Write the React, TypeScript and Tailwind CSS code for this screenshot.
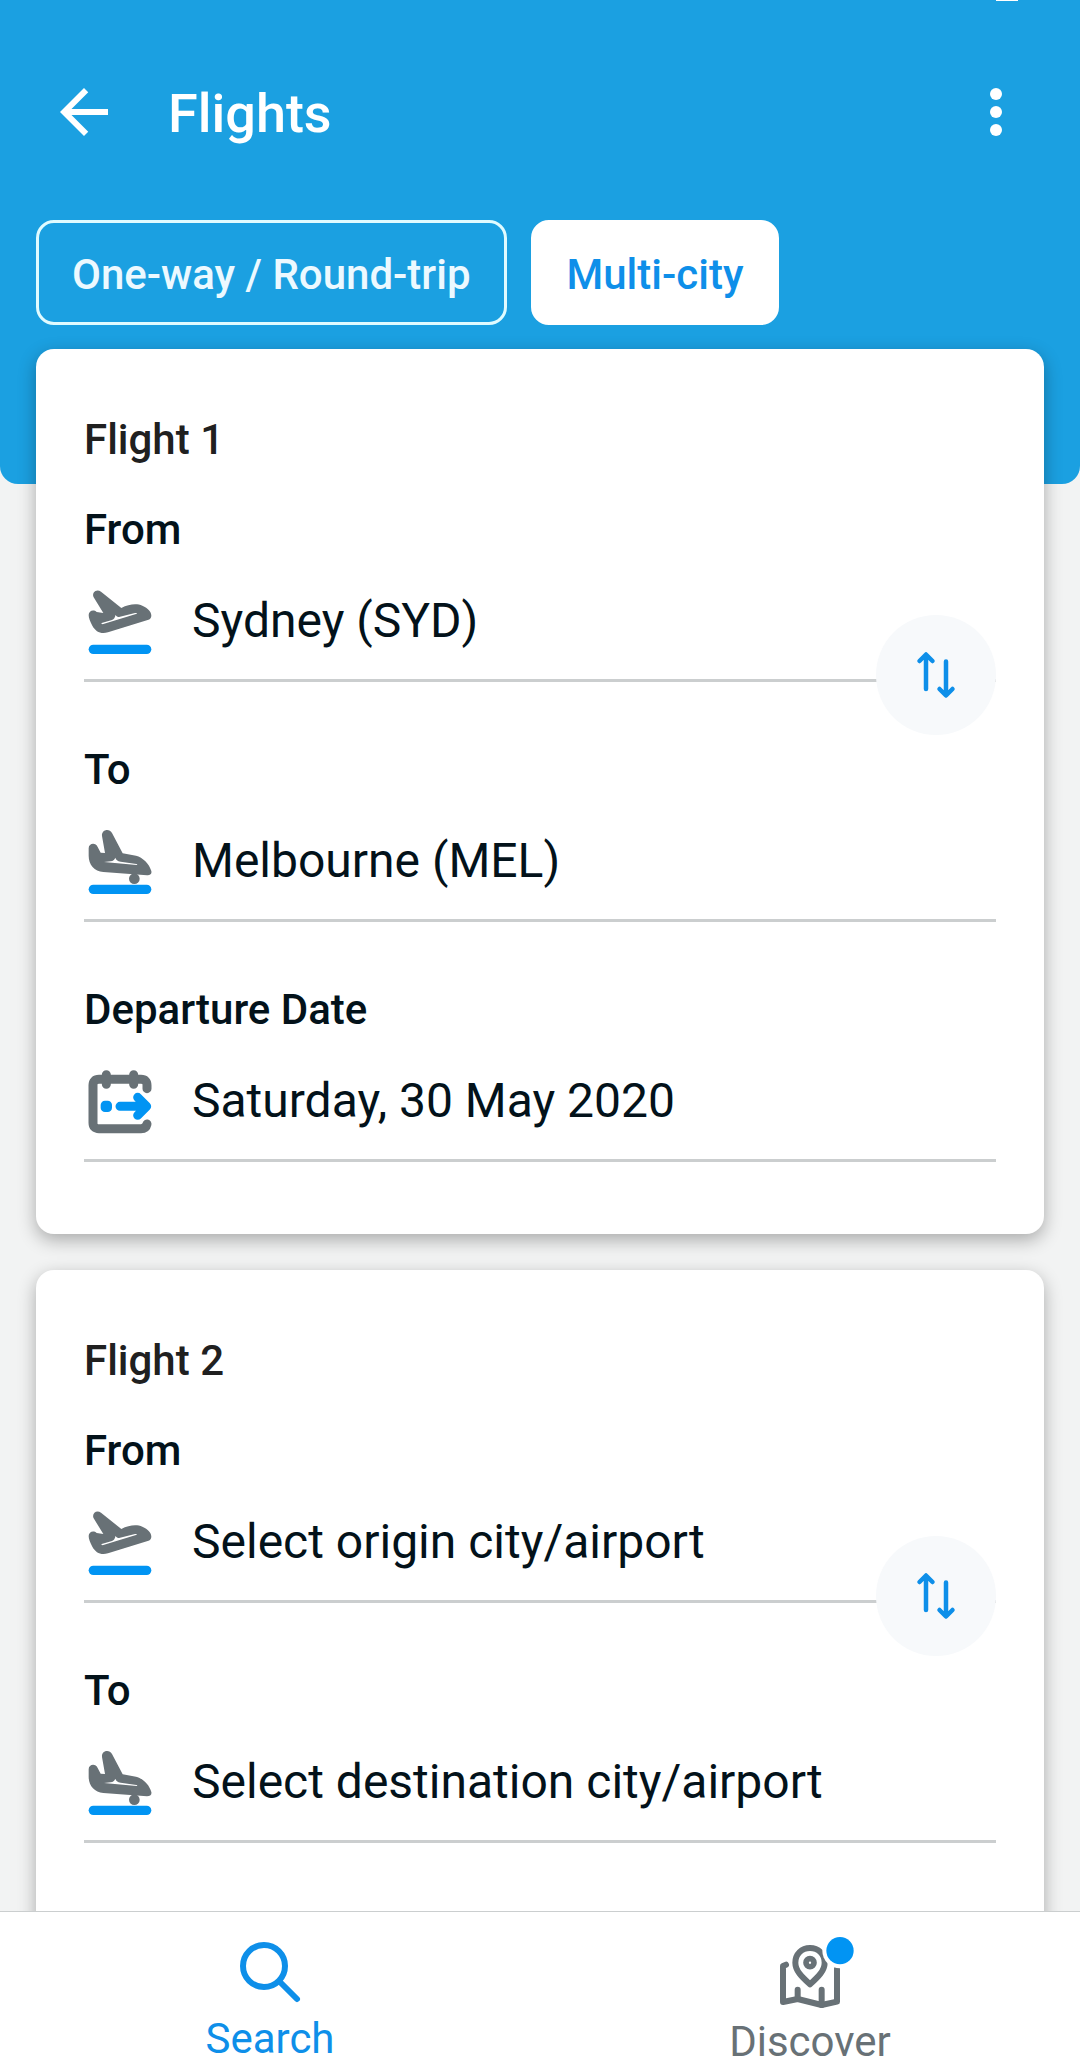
import React, { useState } from 'react';

const TABS = ['One-way / Round-trip', 'Multi-city'];

const FLIGHTS = [
  { id: 1, from: 'Sydney (SYD)', to: 'Melbourne (MEL)', date: 'Saturday, 30 May 2020' },
  { id: 2, from: '', to: '', date: '' },
];

function BackIcon() {
  return (
    <svg viewBox="0 0 24 24" className="w-[72px] h-[72px]" fill="currentColor">
      <path d="M20 11H7.83l5.59-5.59L12 4l-8 8 8 8 1.41-1.41L7.83 13H20v-2z" />
    </svg>
  );
}

function MoreIcon() {
  return (
    <svg viewBox="0 0 24 24" className="w-[72px] h-[72px]" fill="currentColor">
      <circle cx="12" cy="6" r="2" />
      <circle cx="12" cy="12" r="2" />
      <circle cx="12" cy="18" r="2" />
    </svg>
  );
}

function TakeoffIcon() {
  return (
    <svg viewBox="0 0 216 216" className="w-[72px] h-[72px] shrink-0">
      <path
        fill="#687176"
        fillRule="evenodd"
        d="M29 37C22 22 38 10 51 20L112 69C135 57 158 55 175 62C192 69 202 80 202 92C202 99 198 103 191 105L72 142C50 148 35 140 25 122C18 109 14 98 14 90C14 78 28 72 38 81L58 84ZM53 114C51 117 54 118 58 117L156 87C161 84 159 83 153 84L108 95C100 97 97 94 95 89C93 97 90 103 84 105Z"
      />
      <path d="M28 193H188" stroke="#0194f3" strokeWidth="28" strokeLinecap="round" />
    </svg>
  );
}

function LandingIcon() {
  return (
    <svg viewBox="0 0 216 216" className="w-[72px] h-[72px] shrink-0">
      <path
        fill="#687176"
        fillRule="evenodd"
        d="M14 70C14 54 35 51 41 66L50 83L63 84L54 33C52 14 76 9 84 24L116 85L156 92C176 97 196 116 202 138C204 147 198 151 189 151L58 141C31 138 14 120 14 92ZM60 111L158 120C161 120 160 118 157 117L110 110C100 108 96 104 94 98C91 105 87 108 80 109Z"
      />
      <circle cx="151" cy="161" r="16" fill="#687176" />
      <path d="M28 193H188" stroke="#0194f3" strokeWidth="28" strokeLinecap="round" />
    </svg>
  );
}

function CalendarIcon() {
  return (
    <svg viewBox="0 0 216 216" className="w-[72px] h-[72px] shrink-0" fill="none" strokeLinecap="round" strokeLinejoin="round">
      <g stroke="#687176" strokeWidth="27">
        <path d="M189 71V61Q189 43 171 43H45Q27 43 27 61V173Q27 191 45 191H171Q186 191 189 177" />
        <path d="M67 29V58M149 29V58" />
      </g>
      <rect x="50" y="107" width="34" height="34" rx="13" fill="#0194f3" />
      <path d="M108 124H186M161 97L188 124L161 151" stroke="#0194f3" strokeWidth="27" />
    </svg>
  );
}

function SwapIcon() {
  return (
    <svg
      viewBox="0 0 48 48"
      className="w-12 h-12"
      fill="none"
      stroke="#0e8fe9"
      strokeWidth="4.5"
      strokeLinecap="round"
      strokeLinejoin="round"
    >
      <path d="M14 4V38M7.5 10L14 3.5L20.5 10" />
      <path d="M34 10.5V44M27.5 38L34 44.5L40.5 38" />
    </svg>
  );
}

function SearchIcon() {
  return (
    <svg viewBox="0 0 72 72" className="w-[72px] h-[72px]" fill="none" stroke="currentColor" strokeWidth="6" strokeLinecap="round">
      <circle cx="30" cy="30" r="21" />
      <path d="M46 46L63 63" />
    </svg>
  );
}

function DiscoverIcon() {
  return (
    <svg viewBox="0 0 216 225" className="w-[72px] h-[75px] overflow-visible" fill="none" strokeLinecap="round" strokeLinejoin="round">
      <g stroke="currentColor" strokeWidth="18">
        <path d="M36 86L27 90V198L71 189L143 207L189 197V98" />
        <path d="M71 161V189M143 161V207" />
        <path d="M108 36C83 36 64 54 64 80C64 104 83 122 108 145C133 122 152 104 152 80C152 54 133 36 108 36Z" />
        <circle cx="108" cy="80" r="12" strokeWidth="17" />
      </g>
      <circle cx="198" cy="44" r="53" fill="white" />
      <circle cx="198" cy="44" r="41" fill="#0194f3" />
    </svg>
  );
}

function Field({ id, label, icon, value, placeholder, onChange }: any) {
  return (
    <div>
      <label htmlFor={id} className="block text-[42px] leading-[48px] font-medium">
        {label}
      </label>
      <div className="mt-[31px] pb-[22px] flex items-center gap-9 border-b-3 border-[#cbcecf]">
        {icon}
        <input
          id={id}
          type="text"
          value={value}
          placeholder={placeholder}
          onChange={e => onChange(e.target.value)}
          className="flex-1 min-w-0 h-[72px] text-[48px] bg-transparent outline-none placeholder:text-[#03121a]"
        />
      </div>
    </div>
  );
}

function FlightCard({ flight, onChange }: any) {
  const swap = () => onChange({ ...flight, from: flight.to, to: flight.from });

  return (
    <section className="bg-white rounded-[18px] px-12 pt-[67px] pb-[72px] shadow-[0_6px_18px_rgba(0,0,0,0.3)]">
      <h2 className="text-[42px] leading-[48px] font-medium text-[#202020]">Flight {flight.id}</h2>

      <div className="mt-[42px] flex flex-col gap-16">
        <div className="relative">
          <Field
            id={`from-${flight.id}`}
            label="From"
            icon={<TakeoffIcon />}
            value={flight.from}
            placeholder="Select origin city/airport"
            onChange={(from: string) => onChange({ ...flight, from })}
          />
          {/* Swap button sits over the underline */}
          <button
            type="button"
            aria-label="Swap origin and destination"
            onClick={swap}
            className="absolute right-0 -bottom-[53px] w-[120px] h-[120px] rounded-full bg-[#f7f9fb] flex items-center justify-center"
          >
            <SwapIcon />
          </button>
        </div>
        <Field
          id={`to-${flight.id}`}
          label="To"
          icon={<LandingIcon />}
          value={flight.to}
          placeholder="Select destination city/airport"
          onChange={(to: string) => onChange({ ...flight, to })}
        />
        <Field
          id={`date-${flight.id}`}
          label="Departure Date"
          icon={<CalendarIcon />}
          value={flight.date}
          placeholder="Select departure date"
          onChange={(date: string) => onChange({ ...flight, date })}
        />
      </div>
    </section>
  );
}

export default function App() {
  const [tab, setTab] = useState('Multi-city');
  const [flights, setFlights] = useState(FLIGHTS);

  const updateFlight = (next: any) => {
    setFlights(flights.map(f => (f.id === next.id ? next : f)));
  };

  return (
    <div className="h-screen flex flex-col bg-[#f2f3f3] text-[#03121a] font-['Roboto',sans-serif]">

      <div className="flex-1 min-h-0 overflow-y-auto [scrollbar-width:none]">
        {/* Header */}
        <header className="relative bg-[#1ba0e1] text-white rounded-b-[18px] pt-[76px] pb-[159px]">
          <span className="absolute top-0 right-[62px] w-[22px] h-px bg-white" />
          <div className="flex items-center px-12">
            <button type="button" aria-label="Back">
              <BackIcon />
            </button>
            <h1 className="ml-12 flex-1 pt-1 text-[54px] leading-[68px] font-medium">Flights</h1>
            <button type="button" aria-label="More options">
              <MoreIcon />
            </button>
          </div>

          {/* Trip type */}
          <div className="mt-[72px] px-9 flex gap-6">
            {TABS.map(name => (
              <button
                key={name}
                type="button"
                onClick={() => setTab(name)}
                className={
                  tab === name
                    ? 'h-[105px] px-[33px] pt-1 rounded-[18px] border-3 border-white bg-white text-[#0e8fe9] text-[42px] font-medium'
                    : 'h-[105px] px-[33px] pt-1 rounded-[18px] border-3 border-[#e0fbff] text-[#ecf9ff] text-[42px] font-medium'
                }
              >
                {name}
              </button>
            ))}
          </div>
        </header>

        {/* Flights */}
        <main className="relative -mt-[135px] px-9 pb-9 flex flex-col gap-9">
          {flights.map(flight => (
            <FlightCard key={flight.id} flight={flight} onChange={updateFlight} />
          ))}
        </main>
      </div>

      {/* Bottom nav */}
      <nav className="relative h-40 shrink-0 grid grid-cols-2 items-start bg-white border-t border-[#cbcecf] pt-6 text-[42px] leading-[48px]">
        <a href="#search" className="flex flex-col items-center gap-[7px] text-[#0e8fe9]">
          <SearchIcon />
          Search
        </a>
        <a href="#discover" className="flex flex-col items-center gap-[7px] text-[#687176]">
          <DiscoverIcon />
          Discover
        </a>
      </nav>

    </div>
  );
}
